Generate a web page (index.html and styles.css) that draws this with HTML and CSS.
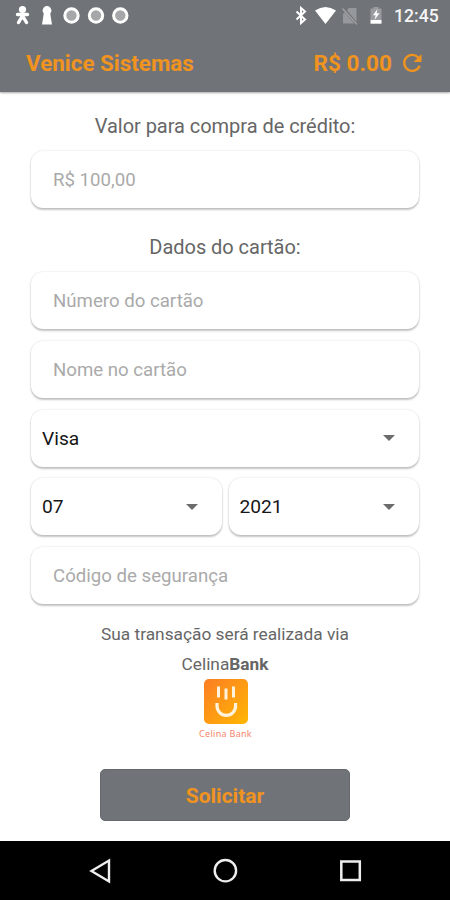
FILE: index.html
```html
<!DOCTYPE html>
<html lang="pt-BR">
<head>
<meta charset="utf-8">
<meta name="viewport" content="width=device-width, initial-scale=1">
<title>Venice Sistemas</title>
<link rel="stylesheet" href="styles.css">
</head>
<body>
<header class="header">
  <div class="status">
    <svg class="status-left" width="135" height="32" viewBox="0 0 135 32">
      <g fill="#fff" stroke="#fff" stroke-linecap="round">
        <circle cx="22.5" cy="9.5" r="3.6" stroke="none"/>
        <path d="M17.5 14.5h10M22.5 14v4M21.5 17.5l-3 5M23.5 17.5l3 5" stroke-width="3.4" fill="none"/>
        <circle cx="47" cy="10.5" r="4.4" stroke="none"/>
        <path d="M44 12h6l2 12.5H42z" stroke="none"/>
      </g>
      <g fill="#a5a7a9" stroke="#fff" stroke-width="3">
        <circle cx="71.5" cy="15.5" r="6.7"/><circle cx="96" cy="15.5" r="6.7"/><circle cx="120.3" cy="15.5" r="6.7"/>
      </g>
    </svg>
    <svg class="status-right" width="95" height="32" viewBox="292 0 95 32">
      <path d="M296.5 11.500l8.500 8-4 3.500V8l4 3.500-8.500 8" fill="none" stroke="#fff" stroke-width="2"/>
      <path d="M315 10.500Q325.500 3.500 336 10.500L325.500 24z" fill="#fff"/>
      <path d="M349 8h7.500v15.500h-13.500V14z" fill="#95989c"/>
      <path d="M343 8l14.500 17" stroke="#707377" stroke-width="2.800"/>
      <path d="M342.500 8.500l14.500 16" stroke="#a0a2a5" stroke-width="1.300"/>
      <path d="M373.500 8.500V7h5v1.500h3V20h-11V8.500z" fill="#999ca0"/>
      <path d="M370.500 20h11v3.700h-11z" fill="#fff"/>
      <path d="M377.500 9l-4.500 6.200h2.700L374.500 20l5-6.700h-2.800z" fill="#fff"/>
    </svg>
    <span class="clock">12:45</span>
  </div>
  <div class="appbar">
    <h1 class="title">Venice Sistemas</h1>
    <span class="balance">R$ 0.00</span>
    <svg class="refresh" width="20" height="20" viewBox="0 0 20 20">
      <path d="M16.200 4.500A8 8 0 1 0 17.700 12.800" fill="none" stroke="#f0931f" stroke-width="2.400"/>
      <path d="M19.500 1v8h-8z" fill="#f0931f"/>
    </svg>
  </div>
</header>
<main class="form">
  <h2 class="label label-value">Valor para compra de crédito:</h2>
  <div class="field hint"><span>R$ 100,00</span></div>
  <h2 class="label label-card">Dados do cartão:</h2>
  <div class="stack">
    <div class="field hint"><span>Número do cartão</span></div>
    <div class="field hint"><span>Nome no cartão</span></div>
    <div class="field select"><span>Visa</span><i class="caret"></i></div>
    <div class="pair">
      <div class="field select"><span>07</span><i class="caret"></i></div>
      <div class="field select"><span>2021</span><i class="caret"></i></div>
    </div>
    <div class="field hint"><span>Código de segurança</span></div>
  </div>
  <p class="via">Sua transação será realizada via<br>Celina<b>Bank</b></p>
  <div class="logo">
    <svg width="44" height="45" viewBox="0 0 44 45">
      <defs><linearGradient id="g" x1="0" y1="0" x2="1" y2="1"><stop offset="0" stop-color="#fb7d24"/><stop offset="1" stop-color="#ffb703"/></linearGradient></defs>
      <rect width="44" height="45" rx="5" fill="url(#g)"/>
      <path d="M14.500 7.500v11M22 9.500v11M29.500 7.500v11" stroke="#fff3dc" stroke-width="3"/>
      <path d="M13 24v3a9.300 9.300 0 0 0 18.600 0v-3" fill="none" stroke="#fff3dc" stroke-width="3.200"/>
    </svg>
    <span class="logo-name">Celina Bank</span>
  </div>
  <button class="submit">Solicitar</button>
</main>
<nav class="navbar">
  <svg width="24" height="26" viewBox="0 0 24 26"><path d="M21 2.500v21L3.500 13z" fill="none" stroke="#eee" stroke-width="2.400"/></svg>
  <svg width="26" height="26" viewBox="0 0 26 26"><circle cx="13.400" cy="12.700" r="10.700" fill="none" stroke="#eee" stroke-width="2.400"/></svg>
  <svg width="24" height="26" viewBox="0 0 24 26"><rect x="3.300" y="3.500" width="18.500" height="18.500" fill="none" stroke="#eee" stroke-width="2.500"/></svg>
</nav>
</body>
</html>
```
FILE: styles.css
```css
* { box-sizing: border-box; }
body {
  margin: 0;
  width: 450px;
  height: 900px;
  display: flex;
  flex-direction: column;
  overflow: hidden;
  background: #fff;
  font-family: Roboto, "Liberation Sans", sans-serif;
}
.header {
  height: 92px;
  flex: none;
  background: #707377;
  box-shadow: 0 1px 2px rgba(0, 0, 0, .35);
}
.status {
  display: flex;
  align-items: center;
  height: 32px;
}
.status-right { margin-left: 157px; }
.clock {
  margin-left: 7px;
  color: #f5f5f5;
  font-size: 17.6px;
  font-weight: 500;
  line-height: 32px;
}
.appbar {
  display: flex;
  align-items: center;
  height: 62px;
  padding: 0 28px 0 26px;
  color: #f0931f;
}
.title {
  margin: 0 auto 0 0;
  font-size: 22.4px;
  font-weight: 700;
}
.balance {
  font-size: 22.6px;
  font-weight: 700;
}
.refresh { margin-left: 10px; }
.form {
  height: 749px;
  flex: none;
  display: flex;
  flex-direction: column;
  padding: 19px 31px 0;
}
.label {
  margin: 0;
  height: 30px;
  line-height: 30px;
  text-align: center;
  font-size: 20px;
  letter-spacing: -.04px;
  font-weight: 400;
  color: #666;
}
.label-value { margin-bottom: 10px; }
.label-card { margin: 24px 0 9.5px; }
.field {
  flex: 1;
  display: flex;
  align-items: center;
  min-height: 57px;
  height: 57px;
  border-radius: 12px;
  background: #fff;
  box-shadow: 0 2px 2px rgba(0, 0, 0, .22), 0 0 2px rgba(0, 0, 0, .16);
}
.form > .field { flex: none; }
.hint {
  padding: 1px 0 0 22px;
  font-size: 18.65px;
  color: #aaa;
}
.select {
  padding: 0 24px 0 11px;
  font-size: 19.2px;
  color: #161616;
}
.caret {
  margin-left: auto;
  border: 6px solid transparent;
  border-top-color: #6c6c6c;
  border-bottom: 0;
}
.stack {
  display: flex;
  flex-direction: column;
  gap: 11.8px;
  height: 333px;
  flex: none;
}
.pair {
  display: flex;
  gap: 7px;
}
.via {
  margin: 14.5px 0 0;
  text-align: center;
  font-size: 17.3px;
  line-height: 30px;
  color: #666;
}
.logo {
  display: flex;
  flex-direction: column;
  align-items: center;
  padding-left: 1px;
}
.logo-name {
  margin-top: 3px;
  font: 9px/13px "Noto Sans", sans-serif;
  letter-spacing: .3px;
  color: #f4866c;
}
.submit {
  width: 250px;
  height: 52px;
  margin: 29px auto 0;
  padding: 2px 0 0;
  border: 1px solid #65686c;
  border-radius: 5px;
  background: #707377;
  color: #f0931f;
  font: 700 21px Roboto, sans-serif;
}
.navbar {
  height: 59px;
  flex: none;
  display: flex;
  align-items: center;
  justify-content: space-between;
  padding: 0 88px;
  background: #000;
}
```
